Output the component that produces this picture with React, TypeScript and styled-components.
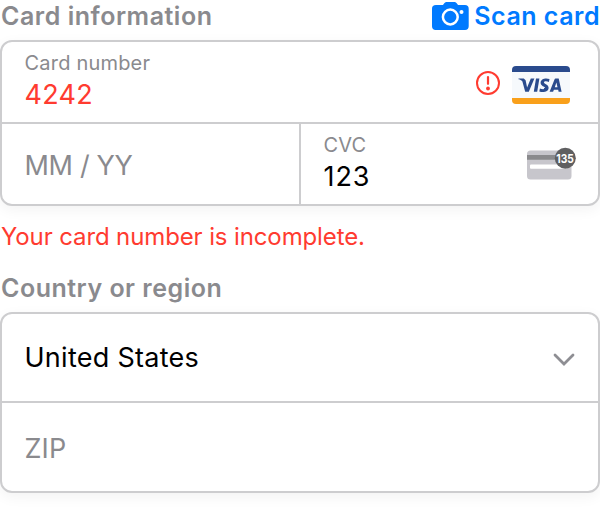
import React from 'react';
import styled, { createGlobalStyle } from 'styled-components';

const gray = '#8a8a8e';
const line = '#cdcdcf';
const red = '#ff3b30';
const blue = '#007aff';

const GlobalStyle = createGlobalStyle`
  * { box-sizing: border-box; }
  body {
    margin: 0;
    background: #fff;
    font-family: Inter, "Liberation Sans", sans-serif;
    overflow: hidden;
  }
  svg { display: block; flex: none; overflow: visible; }
`;

const Page = styled.main`
  width: 600px;
  height: 530px;
  overflow: hidden;
`;

const SectionHeader = styled.header`
  display: flex;
  justify-content: space-between;
  height: 40px;
  padding-left: 1px;
  font-size: 25px;
  font-weight: 600;
  line-height: 32px;
  white-space: nowrap;
`;

const SectionTitle = styled.h2<{ $tracking: number }>`
  margin: 0;
  font: inherit;
  color: ${gray};
  letter-spacing: ${(p) => p.$tracking}px;
`;

const ScanButton = styled.button`
  display: flex;
  gap: 5px;
  height: 32px;
  padding: 0;
  border: 0;
  background: none;
  font: inherit;
  color: ${blue};
  letter-spacing: 0.5px;
`;

const FieldGroup = styled.section`
  border: 2px solid ${line};
  border-radius: 12px;
  background: #fff;
  box-shadow: 0 4px 14px rgba(0, 0, 0, 0.05);
`;

const FieldRow = styled.div<{ $height: number }>`
  display: flex;
  height: ${(p) => p.$height}px;
  & + & { border-top: 2px solid ${line}; }
`;

const Field = styled.div`
  display: flex;
  flex: 1;
  align-items: center;
  justify-content: space-between;
  padding: 0 22px 0 22.5px;
  & + & { border-left: 2px solid ${line}; }
`;

const FieldText = styled.div`
  align-self: flex-start;
  padding-top: 9px;
`;

const FieldLabel = styled.div<{ $tracking: number }>`
  margin-bottom: 4px;
  font-size: 20px;
  line-height: 24px;
  color: ${gray};
  letter-spacing: ${(p) => p.$tracking}px;
`;

const FieldValue = styled.div<{ $color?: string; $tracking: number }>`
  font-size: 27px;
  line-height: 32px;
  color: ${(p) => p.$color ?? '#000'};
  letter-spacing: ${(p) => p.$tracking}px;
`;

const Placeholder = styled(FieldValue)`
  padding-top: 4px;
  color: ${gray};
`;

const BrandIcons = styled.div`
  display: flex;
  align-items: center;
  gap: 12px;
  padding: 6px 6px 0 0;
`;

const AlertSvg = styled.svg`
  margin-bottom: 4px;
`;

const ErrorText = styled.p`
  margin: 15px 0 19px 1px;
  font-size: 24px;
  line-height: 32px;
  color: ${red};
  letter-spacing: -0.12px;
`;

const CameraIcon = () => (
  <svg width="37" height="32" viewBox="0 0 37 32">
    <path d="M4 5h6.200c.8 0 1.200-.4 1.700-1.200C12.700 2.500 13.500 2 15 2h7c1.500 0 2.300.5 3.100 1.800.5.800.9 1.200 1.700 1.200H33c2.400 0 3.700 1.300 3.700 3.700v17.600c0 2.400-1.300 3.700-3.700 3.700H3.700C1.300 30 0 28.700 0 26.300V8.700C0 6.300 1.300 5 4 5z" fill={blue} />
    <circle cx="18.300" cy="17" r="7.400" fill="none" stroke="#fff" strokeWidth="2.500" />
    <circle cx="29.500" cy="12" r="2" fill="#fff" />
  </svg>
);

const AlertIcon = () => (
  <AlertSvg width="24" height="24" viewBox="0 0 24 24">
    <circle cx="12" cy="12" r="11" fill="none" stroke={red} strokeWidth="2" />
    <path d="M12 6v6.800" stroke={red} strokeWidth="2.200" strokeLinecap="round" />
    <circle cx="12" cy="17.500" r="1.900" fill={red} />
  </AlertSvg>
);

const VisaIcon = () => (
  <svg width="58" height="38" viewBox="0 0 58 38">
    <rect width="58" height="38" rx="4" fill="#f6f9fc" />
    <path d="M0 6V4a4 4 0 0 1 4-4h50a4 4 0 0 1 4 4v2z" fill="#2a4b8d" />
    <path d="M0 32v2a4 4 0 0 0 4 4h50a4 4 0 0 0 4-4v-2z" fill="#f9a01b" />
    <path d="M6.500 12.600h5.300l1.800 1.700 1.500 7.300 3.700-9h3.600l-5.600 13.200h-3.600l-2.800-10.300c-.5-1.100-2.100-1.900-3.900-2.300z" fill="#2a4b8d" />
    <path d="M24 12.600h3.400l-2.200 13.200h-3.400z" fill="#2a4b8d" />
    <path d="M37.500 13.100l-.6 2.900c-1.800-.8-4.900-1-4.900.4 0 1.500 4.600 1.800 4.600 5.300 0 4.100-5.300 5.200-9.300 3.700l.6-3c2.100 1.100 5.200 1.100 5.200-.4 0-1.500-4.500-1.600-4.500-5.200 0-4.100 5.200-5.100 8.900-3.700z" fill="#2a4b8d" />
    <path fillRule="evenodd" d="M43.500 12.600h3.200l2.900 13.200h-3l-.4-2h-4.300l-.8 2h-3.500l4.900-12.200c.2-.6.600-1 1-1zm.9 3.900-1.600 4.700h2.700z" fill="#2a4b8d" />
  </svg>
);

const CvcIcon = () => (
  <svg width="49" height="34" viewBox="0 0 49 34">
    <rect y="3.500" width="44.500" height="29" rx="3.500" fill="#c7c6cc" />
    <path d="M0 8h44.500v4.700H0z" fill="#8a8a8d" />
    <rect x="3" y="17.500" width="37" height="4.300" rx="1" fill="#fff" />
    <circle cx="38.300" cy="11.200" r="10.500" fill="#5f5f61" />
    <text x="38" y="15.500" fill="#fff" fontFamily="Inter, sans-serif" fontSize="12" fontWeight="700" textAnchor="middle" textLength="17.500" lengthAdjust="spacingAndGlyphs">135</text>
  </svg>
);

const ChevronIcon = () => (
  <svg width="23" height="14" viewBox="0 0 23 14">
    <path d="M2 2l9 9L20 2" fill="none" stroke="#8e8e93" strokeWidth="2.800" strokeLinecap="round" strokeLinejoin="miter" />
  </svg>
);

const ChevronMark = styled.div`
  padding-top: 4px;
`;

export default function App() {
  return (
    <Page>
      <GlobalStyle />
      <SectionHeader>
        <SectionTitle $tracking={0.52}>Card information</SectionTitle>
        <ScanButton>
          <CameraIcon />
          Scan card
        </ScanButton>
      </SectionHeader>
      <FieldGroup>
        <FieldRow $height={80}>
          <Field>
            <FieldText>
              <FieldLabel $tracking={0.2}>Card number</FieldLabel>
              <FieldValue $color={red} $tracking={0.3}>4242</FieldValue>
            </FieldText>
            <BrandIcons>
              <AlertIcon />
              <VisaIcon />
            </BrandIcons>
          </Field>
        </FieldRow>
        <FieldRow $height={82}>
          <Field>
            <Placeholder $tracking={-0.33}>MM / YY</Placeholder>
          </Field>
          <Field>
            <FieldText>
              <FieldLabel $tracking={0.13}>CVC</FieldLabel>
              <FieldValue $tracking={0.9}>123</FieldValue>
            </FieldText>
            <CvcIcon />
          </Field>
        </FieldRow>
      </FieldGroup>
      <ErrorText>Your card number is incomplete.</ErrorText>
      <SectionHeader>
        <SectionTitle $tracking={0.5}>Country or region</SectionTitle>
      </SectionHeader>
      <FieldGroup>
        <FieldRow $height={87}>
          <Field>
            <FieldValue $tracking={0.27}>United States</FieldValue>
            <ChevronMark>
              <ChevronIcon />
            </ChevronMark>
          </Field>
        </FieldRow>
        <FieldRow $height={90}>
          <Field>
            <Placeholder $tracking={0.13}>ZIP</Placeholder>
          </Field>
        </FieldRow>
      </FieldGroup>
    </Page>
  );
}
